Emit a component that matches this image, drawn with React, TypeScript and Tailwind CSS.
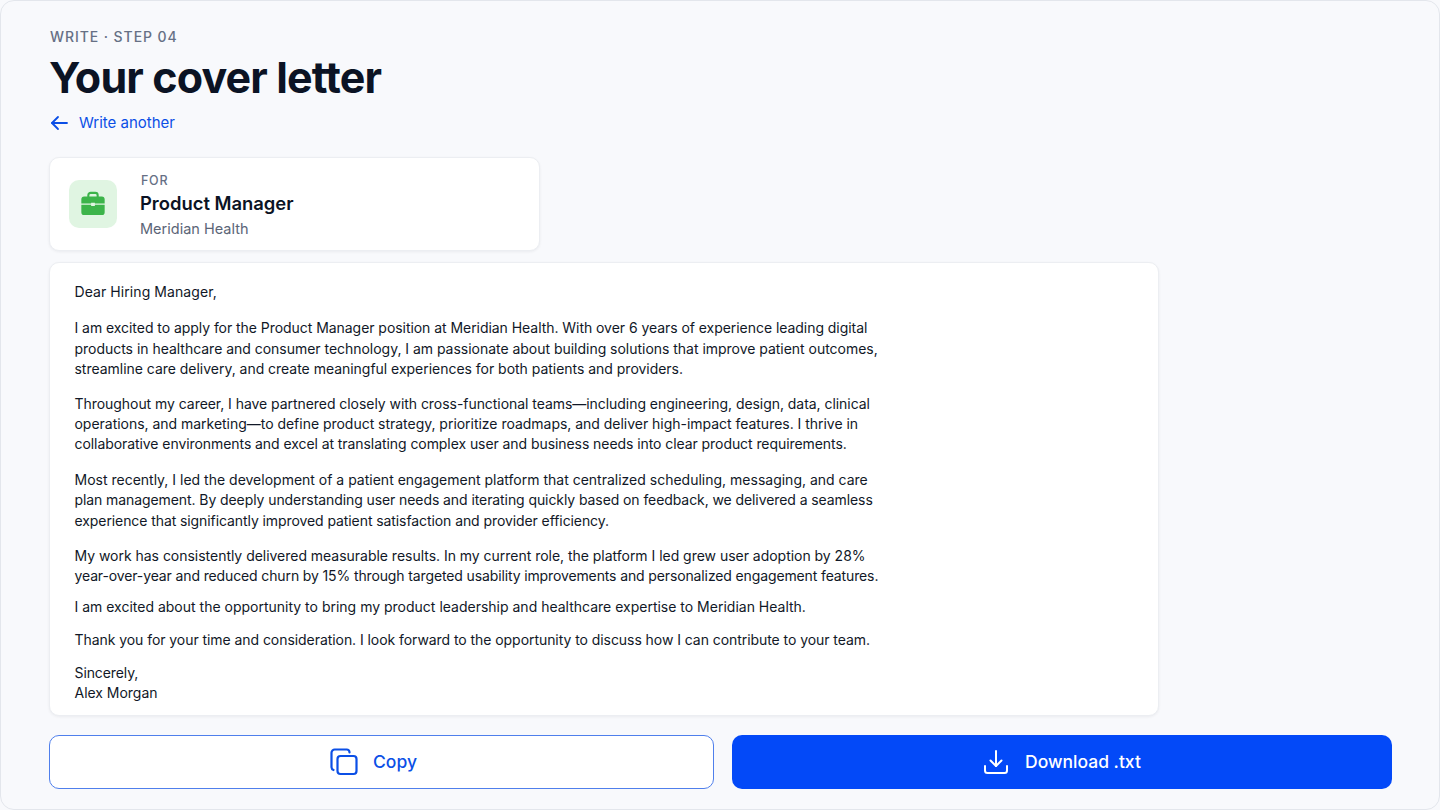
const letter: { mt: string; lines: [string, string][] }[] = [
  { mt: 'mt-0', lines: [['Dear Hiring Manager,', 'tracking-[0.075px]']] },
  {
    mt: 'mt-[16px]',
    lines: [
      ['I am excited to apply for the Product Manager position at Meridian Health. With over 6 years of experience leading digital', 'tracking-[-0.05px]'],
      ['products in healthcare and consumer technology, I am passionate about building solutions that improve patient outcomes,', 'tracking-[-0.025px]'],
      ['streamline care delivery, and create meaningful experiences for both patients and providers.', 'tracking-[-0.025px]'],
    ],
  },
  {
    mt: 'mt-[14px]',
    lines: [
      ['Throughout my career, I have partnered closely with cross-functional teams—including engineering, design, data, clinical', 'tracking-[-0.05px]'],
      ['operations, and marketing—to define product strategy, prioritize roadmaps, and deliver high-impact features. I thrive in', 'tracking-[-0.025px]'],
      ['collaborative environments and excel at translating complex user and business needs into clear product requirements.', 'tracking-[-0.07px]'],
    ],
  },
  {
    mt: 'mt-[15px]',
    lines: [
      ['Most recently, I led the development of a patient engagement platform that centralized scheduling, messaging, and care', 'tracking-[0px]'],
      ['plan management. By deeply understanding user needs and iterating quickly based on feedback, we delivered a seamless', 'tracking-[-0.085px]'],
      ['experience that significantly improved patient satisfaction and provider efficiency.', 'tracking-[-0.085px]'],
    ],
  },
  {
    mt: 'mt-[15px]',
    lines: [
      ['My work has consistently delivered measurable results. In my current role, the platform I led grew user adoption by 28%', 'tracking-[-0.025px]'],
      ['year-over-year and reduced churn by 15% through targeted usability improvements and personalized engagement features.', 'tracking-[-0.127px]'],
    ],
  },
  {
    mt: 'mt-[10px]',
    lines: [['I am excited about the opportunity to bring my product leadership and healthcare expertise to Meridian Health.', 'tracking-[0px]']],
  },
  {
    mt: 'mt-[13px]',
    lines: [['Thank you for your time and consideration. I look forward to the opportunity to discuss how I can contribute to your team.', 'tracking-[-0.06px]']],
  },
  {
    mt: 'mt-[12px]',
    lines: [
      ['Sincerely,', 'tracking-[-0.1px]'],
      ['Alex Morgan', 'tracking-[-0.025px]'],
    ],
  },
];

function BackArrow() {
  return (
    <svg width="20" height="20" viewBox="0 0 20 20" fill="none" stroke="currentColor" strokeWidth="1.8" strokeLinecap="round" strokeLinejoin="round">
      <path d="M3 10h15" />
      <path d="M9 4l-6 6 6 6" />
    </svg>
  );
}

function BriefcaseIcon() {
  return (
    <svg width="28" height="28" viewBox="0 0 24 24" fill="none">
      <path d="M8 6V4.5A2 2 0 0 1 10 2.5h4a2 2 0 0 1 2 2V6" stroke="#3cb44a" strokeWidth="1.8" />
      <path d="M2 8a2.5 2.500 0 0 1 2.500-2.500h15A2.500 2.500 0 0 1 22 8v3.600h-8.400v-.600h-3.200v.600H2V8Z" fill="#3cb44a" />
      <path d="M2 12.600h8.400v1.200h3.200v-1.200H22V19a2.500 2.500 0 0 1-2.500 2.500h-15A2.500 2.500 0 0 1 2 19v-6.400Z" fill="#3cb44a" />
    </svg>
  );
}

function CopyIcon() {
  return (
    <svg width="28" height="28" viewBox="0 0 28 28" fill="none" stroke="currentColor" strokeWidth="2.2" strokeLinecap="round" strokeLinejoin="round">
      <rect x="7.5" y="8" width="19" height="18" rx="3" />
      <path d="M19.500 4.500V4.200A2.700 2.700 0 0 0 16.800 1.500H4.700A3.200 3.200 0 0 0 1.500 4.700v14.600A3 3 0 0 0 3.500 22" />
    </svg>
  );
}

function DownloadIcon() {
  return (
    <svg width="26" height="26" viewBox="0 0 26 26" fill="none" stroke="currentColor" strokeWidth="2" strokeLinecap="round" strokeLinejoin="round">
      <path d="M13 2v15" />
      <path d="M7.500 11.500L13 17l5.500-5.500" />
      <path d="M2 17v4.500A2.500 2.500 0 0 0 4.500 24h17a2.500 2.500 0 0 0 2.500-2.500V17" />
    </svg>
  );
}

export default function App() {
  return (
    <div className="h-[810px] w-[1440px] overflow-hidden bg-[#f8f9fc] font-['Inter',sans-serif]">
      <div className="flex h-full flex-col rounded-[14px] border border-[#e3e6ec] pl-[48px] pr-[47px] pt-[27px]">
        <p className="ml-px text-[14px] font-medium leading-[18px] tracking-[0.066em] text-[#667085]">WRITE · STEP 04</p>
        <h1 className="mt-[4px] text-[43px] font-bold leading-[54px] tracking-[-0.02em] text-[#0b1324]">Your cover letter</h1>
        <a className="mt-[8px] flex items-center gap-[10px] text-[15px] leading-[22px] text-[#0b4fe6]">
          <BackArrow />
          Write another
        </a>

        <div className="mt-[23px] flex h-[94px] w-[491px] items-center gap-[23px] rounded-[10px] border border-[#eceef2] bg-white pl-[19px] shadow-[0_1px_3px_rgba(16,24,40,0.06)]">
          <div className="flex h-[48px] w-[48px] items-center justify-center rounded-[10px] bg-[#e0f5e2]">
            <BriefcaseIcon />
          </div>
          <div className="pt-[4px]">
            <p className="ml-px text-[12.5px] font-medium leading-[16px] tracking-[0.06em] text-[#667085]">FOR</p>
            <p className="mt-[1px] text-[18.4px] font-semibold leading-[26px] text-[#0b1324]">Product Manager</p>
            <p className="mt-[3px] text-[14.5px] leading-[20px] text-[#5b6577]">Meridian Health</p>
          </div>
        </div>

        <div className="mt-[11px] h-[454px] w-[1110px] rounded-[10px] border border-[#eceef2] bg-white pl-[24.5px] pt-[19px] text-[14px] leading-[20.4px] text-[#111827] shadow-[0_1px_3px_rgba(16,24,40,0.06)]">
          {letter.map((para) => (
            <p key={para.lines[0][0]} className={para.mt}>
              {para.lines.map(([line, track]) => (
                <span key={line} className={`block whitespace-nowrap ${track}`}>{line}</span>
              ))}
            </p>
          ))}
        </div>

        <div className="mt-[19px] flex gap-[18px]">
          <button className="flex h-[54px] w-[665px] items-center justify-center gap-[15px] rounded-[10px] border border-[#4f7fec] bg-white pr-[16px] text-[17.5px] font-medium text-[#0b4fe6]">
            <CopyIcon />
            Copy
          </button>
          <button className="flex h-[54px] w-[660px] items-center justify-center gap-[16px] rounded-[10px] bg-[#0349f8] text-[17.5px] font-medium text-white">
            <DownloadIcon />
            Download .txt
          </button>
        </div>
      </div>
    </div>
  );
}
